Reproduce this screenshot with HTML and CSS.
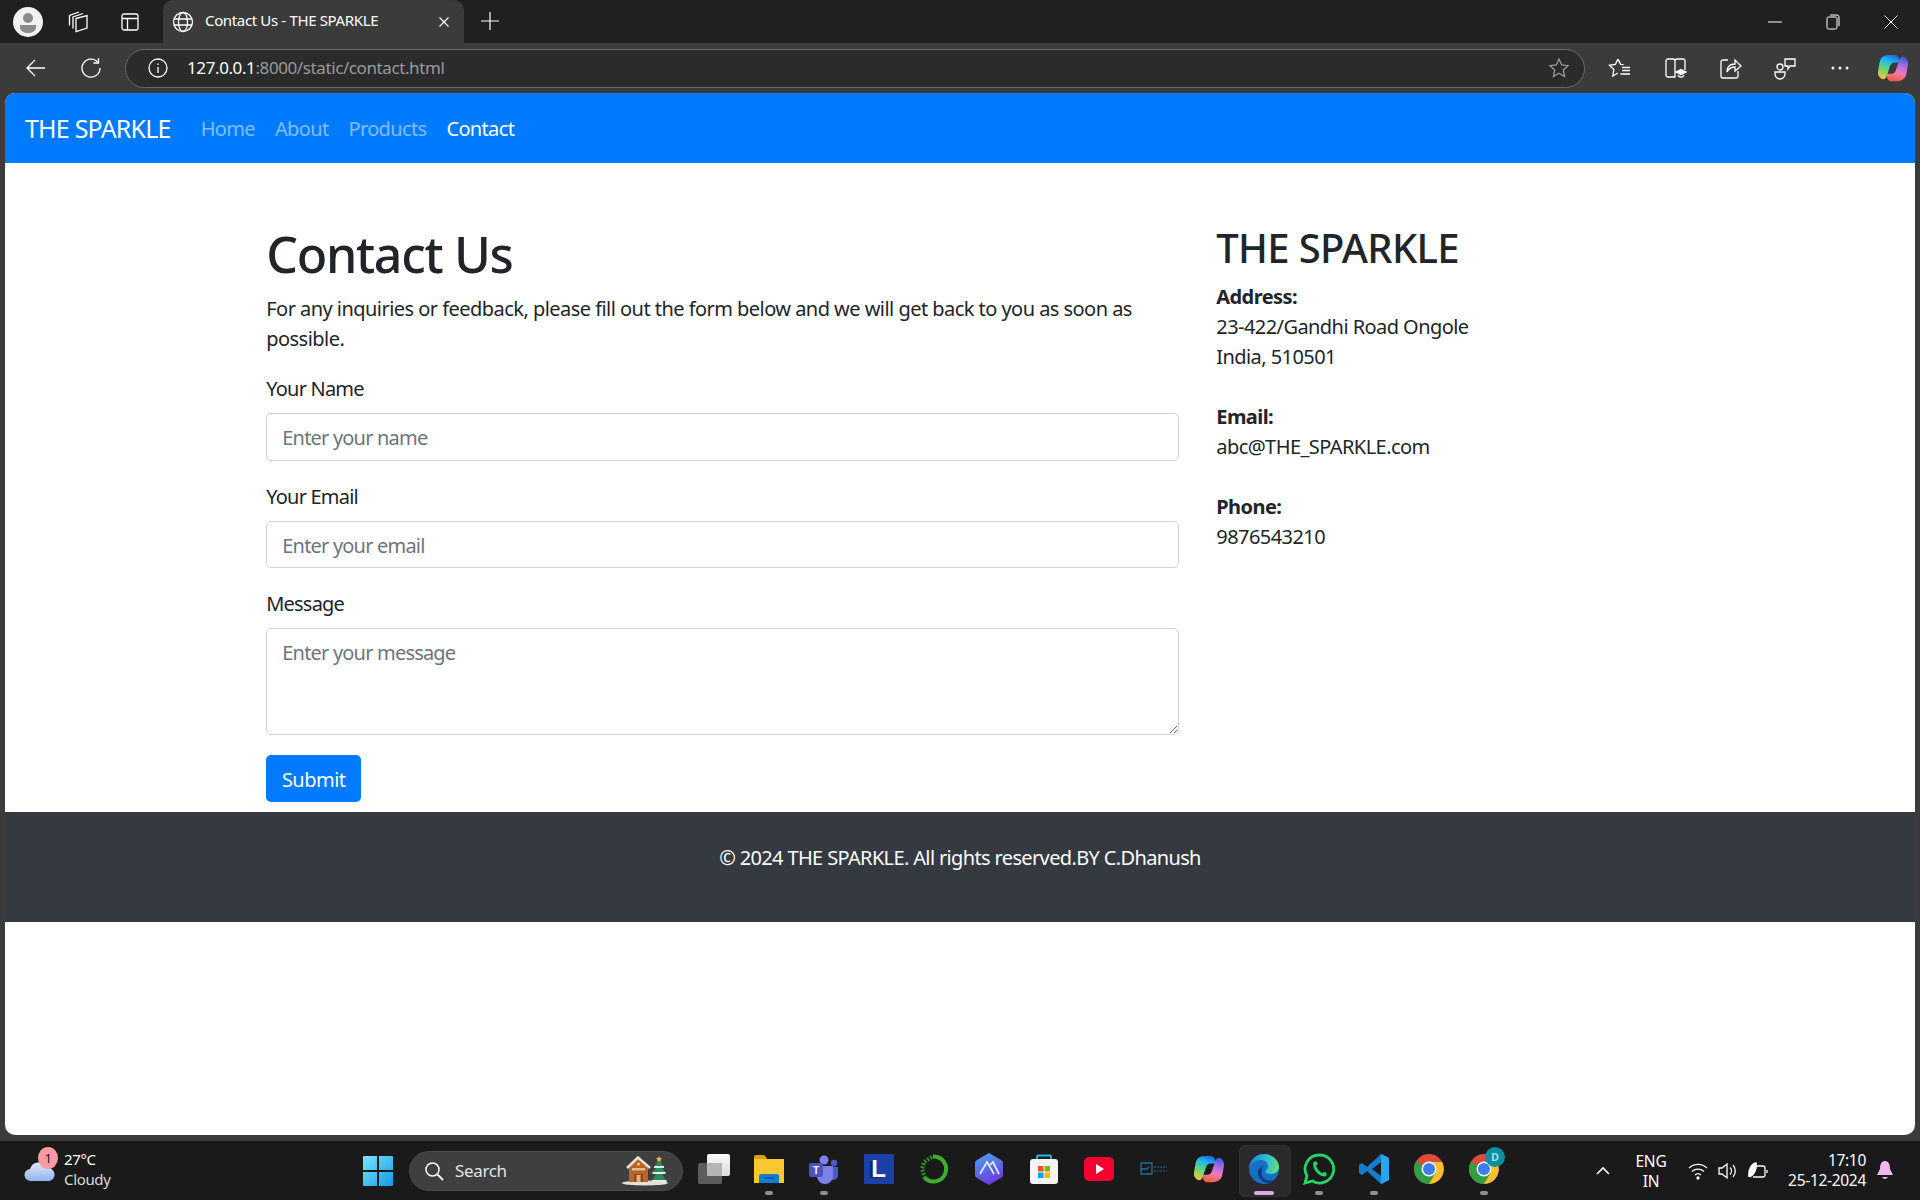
FILE: index.html
```html
<!DOCTYPE html>
<html lang="en">
<head>
<meta charset="utf-8">
<title>Contact Us - THE SPARKLE</title>
<link rel="stylesheet" href="styles.css">
</head>
<body>
<svg class="defs" width="0" height="0" aria-hidden="true">
  <defs>
    <linearGradient id="cpA" x1=".6" y1="0" x2=".3" y2="1"><stop offset="0" stop-color="#1a6fe0"/><stop offset=".25" stop-color="#1fb6f2"/><stop offset=".6" stop-color="#5fd87a"/><stop offset="1" stop-color="#f5c52e"/></linearGradient>
    <linearGradient id="cpB" x1=".6" y1="0" x2=".4" y2="1"><stop offset="0" stop-color="#3a5fd8"/><stop offset=".35" stop-color="#b46be6"/><stop offset=".65" stop-color="#f07ab8"/><stop offset="1" stop-color="#f0603a"/></linearGradient>
    <linearGradient id="edgeA" x1="0" y1=".5" x2="1" y2=".6"><stop offset="0" stop-color="#1a86d8"/><stop offset=".6" stop-color="#2fc0c8"/><stop offset="1" stop-color="#66e07a"/></linearGradient>
    <linearGradient id="winA" x1="0" y1="0" x2="1" y2="1"><stop offset="0" stop-color="#7be6fb"/><stop offset="1" stop-color="#0f9ae8"/></linearGradient>
    <linearGradient id="cloudA" x1="0" y1="0" x2="0" y2="1"><stop offset="0" stop-color="#dfe9fb"/><stop offset="1" stop-color="#8fb4ef"/></linearGradient>
    <linearGradient id="arcA" x1="0" y1="0" x2=".4" y2="1"><stop offset="0" stop-color="#4aa6f0"/><stop offset="1" stop-color="#6a3fe0"/></linearGradient>
    <linearGradient id="stackA" x1="0" y1="0" x2="0" y2="1"><stop offset="0" stop-color="#fafafa"/><stop offset="1" stop-color="#dcdcdc"/></linearGradient>
    <symbol id="copilot" viewBox="0 0 32 32">
      <path d="M21 30h-7c-2.500 0-3.800-2-4.300-4L8.500 22h6c3 0 4-2 5-5l3-9c.7-2 2-4 4-4h.5c3 1 5.500 4 5 8l-1.500 9c-.8 5-4 9-10.500 9z" fill="url(#cpB)"/>
      <path d="M11 2h7c2.500 0 3.800 2 4.300 4l1.200 4h-6c-3 0-4 2-5 5l-3 9c-.7 2-2 4-4 4H5c-3-1-5.500-4-5-8l1.500-9C2.300 6 4.500 2 11 2z" fill="url(#cpA)"/>
    </symbol>
    <symbol id="chrome" viewBox="0 0 32 32">
      <circle cx="16" cy="16" r="15" fill="#dd4b39"/>
      <path d="M16 16 3 8.500A15 15 0 0 0 16 31l6.500-11z" fill="#2f9e44"/>
      <path d="M16 9h13a15 15 0 0 1-13 22l6.500-11z" fill="#fbc02d"/>
      <circle cx="16" cy="16" r="7.500" fill="#fff"/><circle cx="16" cy="16" r="6" fill="#3b7ded"/>
    </symbol>
  </defs>
</svg>

<header class="tabstrip">
  <span class="slot avatar-slot"><svg width="30" height="30" viewBox="0 0 30 30"><circle cx="15" cy="15" r="15" fill="#f2f2f2"/><circle cx="15" cy="11" r="5" fill="#8a8a8a"/><path d="M7 18h16v2c0 4-4 6-8 6s-8-2-8-6z" fill="#8a8a8a"/></svg></span>
  <span class="slot strip-icon"><svg width="24" height="24" viewBox="0 0 24 24" class="line"><path d="M10 8.500l11-3v12.500l-11 3.500z"/><path d="M7 18.500V7L17 3.500"/><path d="M3.500 15.500V5.500L13 2"/></svg></span>
  <span class="slot strip-icon"><svg width="20" height="20" viewBox="0 0 20 20" class="line"><rect x="2" y="2" width="16" height="16" rx="2"/><path d="M2 6.500h16M7.500 6.500V18"/></svg></span>
  <div class="tab">
    <svg width="22" height="22" viewBox="0 0 22 22" class="line"><circle cx="11" cy="11" r="9.500"/><ellipse cx="11" cy="11" rx="4.500" ry="9.500"/><path d="M2 8h18M2 14h18"/></svg>
    <span class="tab-title">Contact Us - THE SPARKLE</span>
    <svg class="tab-close" width="12" height="12" viewBox="0 0 12 12"><path d="M1.500 1.500l9 9M10.500 1.500l-9 9" stroke="#fff" stroke-width="1.200"/></svg>
  </div>
  <span class="slot plus"><svg width="18" height="18" viewBox="0 0 18 18"><path d="M9 0v18M0 9h18" stroke="#fff" stroke-width="1.200"/></svg></span>
  <div class="winctrl">
    <span class="slot ctrl"><svg width="14" height="14" viewBox="0 0 14 14"><path d="M0 7h14" stroke="#fff"/></svg></span>
    <span class="slot ctrl"><svg width="14" height="16" viewBox="0 0 14 16" class="line thin"><rect x="1" y="3" width="10" height="12" rx="1.500"/><path d="M4 1h7a2 2 0 0 1 2 2v9"/></svg></span>
    <span class="slot ctrl"><svg width="14" height="14" viewBox="0 0 14 14"><path d="M.5.500l13 13M13.500.500l-13 13" stroke="#fff"/></svg></span>
  </div>
</header>

<nav class="toolbar">
  <span class="slot tool back"><svg width="20" height="18" viewBox="0 0 20 18" class="line"><path d="M19 9H1M9 1 1 9l8 8"/></svg></span>
  <span class="slot tool refresh"><svg width="22" height="22" viewBox="0 0 22 22" class="line"><path d="M18 5.500A9 9 0 1 0 20 11"/><path d="M18.500 1v5h-5"/></svg></span>
  <div class="omnibox">
    <svg width="20" height="20" viewBox="0 0 20 20" class="line"><circle cx="10" cy="10" r="9"/><path d="M10 9v6M10 5.500v1.500"/></svg>
    <span class="url"><span class="url-host">127.0.0.1</span>:8000/static/contact.html</span>
    <svg class="star" width="22" height="22" viewBox="0 0 22 22"><path d="M11 2l2.700 6 6.300.700-4.700 4.300 1.300 6.500L11 16.200 5.400 19.500l1.300-6.500L2 8.700 8.300 8z" fill="none" stroke="#9a9a9a" stroke-width="1.300"/></svg>
  </div>
  <div class="tool-right">
    <span class="slot tool"><svg width="24" height="24" viewBox="0 0 24 24" class="line"><path d="M10 3 7.300 8.500 1.500 9.300 5.800 13.500 4.800 20 10 17M10 3l2.600 5.300 3 .400M14 11.500h8M14 14.500h8M12.500 18h9.500"/></svg></span>
    <span class="slot tool"><svg width="24" height="24" viewBox="0 0 24 24" class="line"><path d="M12 5v16H5a2 2 0 0 1-2-2V5a2 2 0 0 1 2-2h5a2 2 0 0 1 2 2zM12 5a2 2 0 0 1 2-2h6a2 2 0 0 1 2 2v9"/><path d="M13 16l5-2.500 5 2.500-5 2.500z" fill="#fff"/><path d="M15 19c1 3 5 3 6 0"/></svg></span>
    <span class="slot tool"><svg width="24" height="24" viewBox="0 0 24 24" class="line"><path d="M10 4H5a2 2 0 0 0-2 2v14a2 2 0 0 0 2 2h13a2 2 0 0 0 2-2v-5"/><path d="M9 16c0-5 3-8 8-8V4l6 6-6 5v-4c-3 0-6 1-8 5z"/></svg></span>
    <span class="slot tool"><svg width="24" height="24" viewBox="0 0 24 24" class="line"><circle cx="7" cy="11" r="3"/><path d="M2 16h10v2a5 5 0 0 1-10 0z"/><path d="M12 3h10v7h-5l-2 3v-3h-3z"/></svg></span>
    <span class="slot tool"><svg width="18" height="4" viewBox="0 0 18 4"><circle cx="2" cy="2" r="1.500" fill="#fff"/><circle cx="9" cy="2" r="1.500" fill="#fff"/><circle cx="16" cy="2" r="1.500" fill="#fff"/></svg></span>
    <span class="slot tool tool-copilot"><svg width="30" height="30"><use href="#copilot"/></svg></span>
  </div>
</nav>

<div class="viewport">
  <div class="navbar">
    <a class="brand">THE SPARKLE</a>
    <a class="nav-link">Home</a>
    <a class="nav-link">About</a>
    <a class="nav-link">Products</a>
    <a class="nav-link active">Contact</a>
  </div>
  <main class="container">
    <section class="col-main">
      <h1>Contact Us</h1>
      <p>For any inquiries or feedback, please fill out the form below and we will get back to you as soon as possible.</p>
      <form>
        <div class="group"><label for="n">Your Name</label><input id="n" type="text" placeholder="Enter your name"></div>
        <div class="group"><label for="e">Your Email</label><input id="e" type="email" placeholder="Enter your email"></div>
        <div class="group"><label for="m">Message</label><textarea id="m" placeholder="Enter your message"></textarea></div>
        <button type="button" class="submit">Submit</button>
      </form>
    </section>
    <aside class="col-side">
      <h2>THE SPARKLE</h2>
      <p><strong>Address:</strong><br>23-422/Gandhi Road Ongole<br>India, 510501</p>
      <p><strong>Email:</strong><br>abc@THE_SPARKLE.com</p>
      <p><strong>Phone:</strong><br>9876543210</p>
    </aside>
  </main>
  <footer class="footer"><p>&copy; 2024 THE SPARKLE. All rights reserved.BY C.Dhanush</p></footer>
</div>

<div class="taskbar">
  <div class="weather">
    <span class="weather-icon">
      <svg width="32" height="22" viewBox="0 0 32 22"><path d="M7 21a6 6 0 0 1-1-12 9 9 0 0 1 17-1 6.500 6.500 0 0 1 2 13z" fill="url(#cloudA)"/></svg>
      <span class="badge-one">1</span>
    </span>
    <span class="weather-text"><span>27°C</span><span class="dim">Cloudy</span></span>
  </div>
  <span class="slot win"><svg width="30" height="30" viewBox="0 0 30 30"><path d="M0 1a1 1 0 0 1 1-1h13v14H0zM16 0h13a1 1 0 0 1 1 1v13H16zM0 16h14v14H1a1 1 0 0 1-1-1zM16 16h14v13a1 1 0 0 1-1 1H16z" fill="url(#winA)"/></svg></span>
  <div class="search">
    <svg width="20" height="20" viewBox="0 0 20 20"><circle cx="8.500" cy="8.500" r="6.500" fill="none" stroke="#fff" stroke-width="1.500"/><path d="M13.500 13.500 19 19" stroke="#fff" stroke-width="1.800"/></svg>
    <span class="search-label">Search</span>
    <svg class="search-art" width="46" height="30" viewBox="0 0 46 30">
      <ellipse cx="23" cy="27" rx="23" ry="2.500" fill="#e8dfd8"/>
      <path d="M7 11 16 2l10 9v15H7z" fill="#b8642a"/>
      <path d="M5 12 16 1.500 28 12" fill="none" stroke="#e9e2da" stroke-width="2.500"/>
      <rect x="12" y="18" width="9" height="8" fill="#8e4a1e"/><rect x="14.500" y="19" width="4" height="7" fill="#e8b070"/>
      <rect x="10" y="12" width="13" height="2.500" fill="#d9c08a"/><circle cx="16.500" cy="8" r="1.500" fill="#f3d56a"/>
      <path d="M37 3l5 8h-10z" fill="#2e8b57"/><path d="M37 8l7 9H30z" fill="#2e8b57"/><path d="M37 13l8 13H29z" fill="#2e8b57"/>
      <path d="M32 11h10M30.500 17h13M29.500 25h15" stroke="#dfe9f2" stroke-width="2.200"/>
      <path d="M37 0l1 2 2 .3-1.500 1.500.3 2-1.800-1-1.800 1 .3-2L34 2.300l2-.3z" fill="#f0c040"/>
    </svg>
  </div>
  <div class="apps">
    <span class="app"><svg width="32" height="30" viewBox="0 0 32 30"><rect x="0" y="9" width="24" height="21" rx="2" fill="#5c5c5c"/><rect x="9" y="0" width="23" height="22" rx="2" fill="url(#stackA)"/><rect x="9" y="9" width="15" height="13" rx="1" fill="#b4b4b4"/></svg></span>
    <span class="app on"><svg width="30" height="30" viewBox="0 0 30 30"><path d="M0 3a2 2 0 0 1 2-2h7q2 0 3 2l1 2H0z" fill="#d9a20b"/><path d="M0 5h30v24H0z" fill="#fbc733"/><path d="M5 29v-7a2 2 0 0 1 2-2h16a2 2 0 0 1 2 2v7z" fill="#0f7fd0"/><path d="M10 24h10" stroke="#0a4f8f" stroke-width="1.500"/></svg></span>
    <span class="app on"><svg width="30" height="30" viewBox="0 0 30 30"><circle cx="15" cy="6" r="4.500" fill="#7b83eb"/><circle cx="25" cy="9" r="3.200" fill="#5059c9"/><path d="M20 13h9v8a5 5 0 0 1-9 3z" fill="#5059c9"/><path d="M8 12h16v10a8 8 0 0 1-16 0z" fill="#7b83eb"/><rect x="0" y="9" width="14" height="14" rx="2" fill="#4b53bc"/><text x="7" y="20" class="teams-t">T</text></svg></span>
    <span class="app"><span class="l-tile">L</span></span>
    <span class="app"><svg width="30" height="30" viewBox="0 0 30 30"><path d="M14 2.500A12.500 12.500 0 1 1 5 23" fill="none" stroke="#3fae2a" stroke-width="4"/><path d="M13 3 5 8 3 15l3 9" fill="none" stroke="#2f8f22" stroke-width="4" stroke-dasharray="2 1.500"/></svg></span>
    <span class="app"><svg width="28" height="32" viewBox="0 0 28 32"><path d="M14 0 26 7q2 1 2 3v12q0 2-2 3l-12 7-12-7q-2-1-2-3V10q0-2 2-3z" fill="url(#arcA)"/><path d="M5 21 12 9l7 12M15 12l3-3 6 12" fill="none" stroke="#e4edff" stroke-width="1.700"/></svg></span>
    <span class="app"><svg width="30" height="30" viewBox="0 0 30 30"><path d="M8 7V2.500a1 1 0 0 1 1-1h12a1 1 0 0 1 1 1V7" fill="none" stroke="#2bb7e8" stroke-width="1.800"/><rect x="1" y="5" width="28" height="25" rx="3" fill="#f5f5f5"/><rect x="9" y="12" width="5.500" height="5.500" fill="#f25022"/><rect x="15.500" y="12" width="5.500" height="5.500" fill="#7fba00"/><rect x="9" y="18.500" width="5.500" height="5.500" fill="#00a4ef"/><rect x="15.500" y="18.500" width="5.500" height="5.500" fill="#ffb900"/></svg></span>
    <span class="app"><svg width="30" height="24" viewBox="0 0 30 24"><rect width="30" height="24" rx="5" fill="#f5002f"/><path d="M12 7l8 5-8 5z" fill="#fff"/></svg></span>
    <span class="app"><svg width="28" height="14" viewBox="0 0 28 14"><path d="M1 1h11v11H1zM1 7h6l2-2" fill="none" stroke="#1f6f9c" stroke-width="1.300"/><path d="M14 5h13M14 9h13" stroke="#23404f" stroke-width="2" stroke-dasharray="2 1"/></svg></span>
    <span class="app"><svg width="30" height="30"><use href="#copilot"/></svg></span>
    <span class="app active-app"><svg width="32" height="32" viewBox="0 0 32 32"><circle cx="16" cy="16" r="15" fill="#1470c4"/><path d="M1 15C2 6 9 1 16 1c8 0 15 6 15 13 0 4-3 7-8 7-3 0-6-1-6-3 0 0 3-1 3-5 0-4-4-6-7-6C7 7 2 11 1 15z" fill="url(#edgeA)"/><path d="M15 13c-4 1-6 5-5 9 1 4 5 8 10 8 3 0 6-2 7-4-3 2-7 2-10 0-3-2-4-5-3-9 0-2 1-3 1-4z" fill="#123f8a"/></svg></span>
    <span class="app on"><svg width="32" height="32" viewBox="0 0 32 32"><path d="M16 2a14 14 0 0 0-12 21L2 30l7.500-2A14 14 0 1 0 16 2z" fill="none" stroke="#25d366" stroke-width="2.800"/><path d="M12 10c-1.500 5 4 12 10 12" fill="none" stroke="#25d366" stroke-width="3" stroke-linecap="round"/><circle cx="12.500" cy="10.500" r="2" fill="#25d366"/><circle cx="21.500" cy="21" r="2" fill="#25d366"/></svg></span>
    <span class="app on"><svg width="30" height="30" viewBox="0 0 30 30"><path d="M22 0 30 4v22l-8 4-14-13-5 4-3-2v-8l3-2 5 4z" fill="#0f7fd0"/><path d="M22 8 13 15l9 7z" fill="#1a1a1a"/><path d="M22 0 30 4v22l-8 4z" fill="#27a6ee"/></svg></span>
    <span class="app"><svg width="32" height="32"><use href="#chrome"/></svg></span>
    <span class="app on chrome-two"><svg width="32" height="32"><use href="#chrome"/></svg><span class="badge-d">D</span></span>
  </div>
  <div class="tray">
    <span class="caret"><svg width="14" height="9" viewBox="0 0 14 9"><path d="M1 8l6-6 6 6" fill="none" stroke="#fff" stroke-width="1.600"/></svg></span>
    <span class="lang"><span>ENG</span><span>IN</span></span>
    <span class="tray-icons">
      <svg width="20" height="18" viewBox="0 0 20 18" class="line"><path d="M1 6a13 13 0 0 1 18 0M4 9.500a9 9 0 0 1 12 0M7 13a4.500 4.500 0 0 1 6 0"/><circle cx="10" cy="16" r="1" fill="#fff"/></svg>
      <svg width="20" height="18" viewBox="0 0 20 18" class="line"><path d="M1 6h3l5-4v14l-5-4H1zM12 5.500a5 5 0 0 1 0 7M15 3a9 9 0 0 1 0 12"/></svg>
      <svg width="20" height="18" viewBox="0 0 20 18" class="line"><path d="M7 4h8a2 2 0 0 1 2 2v7a2 2 0 0 1-2 2H5M19 8v3"/><path d="M1 15C0 8 3 2 8 1c1 5-1 11-6 14" fill="#fff"/></svg>
    </span>
    <span class="clock"><span>17:10</span><span>25-12-2024</span></span>
    <svg class="bell" width="16" height="20" viewBox="0 0 16 20"><path d="M8 0c4 0 5 4 5 8l3 6H0l3-6c0-4 1-8 5-8z" fill="#efb8ef"/><path d="M5 16h6q-3 4-6 0z" fill="#efb8ef"/></svg>
  </div>
</div>
</body>
</html>
```

FILE: styles.css
```css
* { box-sizing: border-box; }
html, body { margin: 0; height: 100%; }
body {
  width: 1920px; height: 1200px; overflow: hidden;
  display: flex; flex-direction: column;
  background: #3b3b3b;
  font-family: "Noto Sans", "Liberation Sans", sans-serif;
  color: #212529;
}
.defs { position: absolute; }
.slot { display: flex; align-items: center; justify-content: center; flex: none; }
.line { fill: none; stroke: #fff; stroke-width: 1.300; }
.line.thin { stroke-width: 1; }

.tabstrip { height: 43px; flex: none; background: #202020; display: flex; align-items: center; padding-left: 13px; }
.avatar-slot { width: 30px; margin-right: 9px; }
.strip-icon { width: 52px; }
.tab {
  width: 301px; height: 43px; margin-left: 7px; background: #3b3b3b;
  border-radius: 10px 10px 0 0; display: flex; align-items: center; padding: 0 14px 0 9px;
  color: #fff; font-size: 15px; letter-spacing: -.35px;
}
.tab-title { margin-left: 11px; flex: 1; white-space: nowrap; padding-bottom: 4px; }
.plus { margin-left: 17px; width: 18px; padding-bottom: 2px; height: 20px; }
.winctrl { margin-left: auto; display: flex; }
.ctrl { width: 58px; height: 43px; }

.toolbar { height: 50px; flex: none; background: #3b3b3b; display: flex; align-items: center; padding: 0 0 0 8px; }
.tool { width: 55px; height: 40px; }
.tool-copilot { margin-left: -2px; }
.omnibox {
  width: 1465px; height: 39px; margin-left: 7px; border: 1px solid #6a6a6a; border-radius: 20px; background: #2b2b2b;
  display: flex; align-items: center; padding: 0 14px 0 22px;
}
.url { margin-left: 19px; font-size: 17px; letter-spacing: -.4px; color: #9a9a9a; flex: 1; white-space: nowrap; padding-bottom: 2px; }
.url-host { color: #fff; }
.tool-right { display: flex; margin-left: 7px; }

.viewport { height: 1042px; flex: none; margin: 0 5px; background: #fff; border-radius: 10px; overflow: hidden; display: flex; flex-direction: column; }
.navbar { height: 70px; flex: none; background: #007bff; display: flex; align-items: center; padding: 0 20px; }
.brand { color: #fff; font-size: 25px; margin-right: 20px; letter-spacing: -.8px; white-space: nowrap; }
.nav-link { color: rgba(255,255,255,.5); font-size: 20px; padding: 0 10px; letter-spacing: -.65px; }
.nav-link.active { color: #fff; }

.container { width: 1425px; margin: 60px auto 0; display: flex; flex: none; }
.col-main { width: 950px; padding: 0 18.750px; }
.col-side { width: 475px; padding: 0 18.750px; }
h1 { margin: 0 0 9px; padding-top: 1px; font-size: 50px; line-height: 60px; font-weight: 500; letter-spacing: -1.300px; }
h2 { margin: 0 0 9px; padding-top: 1px; font-size: 40px; line-height: 48px; font-weight: 500; letter-spacing: -.660px; }
p { margin: 0 0 19px; padding-top: 1px; font-size: 20px; line-height: 30px; letter-spacing: -.54px; }
.col-side p { margin-bottom: 29px; letter-spacing: -.56px; }
strong { font-weight: 700; }
.group { margin-bottom: 20px; }
label { display: block; margin-bottom: 9px; padding-top: 1px; font-size: 20px; line-height: 30px; letter-spacing: -.8px; }
input, textarea {
  display: block; width: 100%; height: 47.500px; padding: 8.500px 15px 6.500px;
  border: 1px solid #ced4da; border-radius: 5px; background: #fff; color: #495057;
  font: 20px/30px "Noto Sans", "Liberation Sans", sans-serif; letter-spacing: -.8px; outline: none;
}
textarea { height: 107px; resize: vertical; }
input::placeholder, textarea::placeholder { color: #6c757d; opacity: 1; }
.submit {
  display: block; width: 95px; height: 47px; padding: 2px 0 0; border: 0; border-radius: 5px; background: #007bff; color: #fff;
  font: 20px/30px "Noto Sans", "Liberation Sans", sans-serif; letter-spacing: -.5px;
}
.footer { margin-top: 10px; height: 110px; flex: none; background: #343a40; color: #fff; padding-top: 30px; text-align: center; }
.footer p { letter-spacing: -.64px; }

.taskbar { position: relative; margin-top: 6px; height: 59px; flex: none; background: #1a1a1a; display: flex; align-items: center; color: #fff; font-size: 15px; letter-spacing: -.35px; }
.weather { width: 363px; flex: none; display: flex; align-items: center; padding-left: 24px; }
.weather-icon { position: relative; display: flex; width: 40px; }
.badge-one { position: absolute; left: 14px; top: -13px; width: 20px; height: 22px; border-radius: 50%; background: #ff9aa2; color: #1a1a1a; font-size: 13px; line-height: 22px; text-align: center; }
.weather-text { display: flex; flex-direction: column; line-height: 20px; font-size: 15px; padding-bottom: 4px; }
.dim { color: #d8d8d8; }
.win { width: 30px; }
.search { width: 274px; height: 40px; margin-left: 16px; border-radius: 20px; background: #3f3f3f; border: 1px solid #4b4b4b; display: flex; align-items: center; padding: 0 14px 0 14px; }
.search-label { margin-left: 11px; flex: 1; font-size: 17px; color: #e4e4e4; }
.apps { display: flex; margin-left: 3px; flex: none; }
.app { position: relative; width: 55px; height: 59px; display: flex; align-items: center; justify-content: center; padding-bottom: 4px; }
.app.on::after { content: ""; position: absolute; left: 23.500px; bottom: 5px; width: 8px; height: 4px; border-radius: 2px; background: #8e8e8e; }
.active-app::before { content: ""; position: absolute; left: 2.500px; top: 4px; width: 50px; height: 50px; background: #2a2a2a; border-radius: 6px; border: 1px solid #333; }
.active-app svg { position: relative; }
.active-app::after { content: ""; position: absolute; left: 17.500px; bottom: 5px; width: 20px; height: 4px; border-radius: 2px; background: #e0a8e8; }
.l-tile { width: 30px; height: 30px; background: #1c3faa; color: #fff; font: 700 24px/30px "Liberation Sans", sans-serif; text-align: center; text-shadow: -3px 1px #0b2a6a; }
.teams-t { fill: #fff; font: 700 10px "Liberation Sans", sans-serif; text-anchor: middle; }
.badge-d { position: absolute; left: 29px; top: 6px; width: 20px; height: 20px; border-radius: 50%; background: #0b8ea0; color: #9fdfe8; font-size: 11px; font-weight: 700; line-height: 20px; text-align: center; letter-spacing: 0; }
.tray { flex: 1; display: flex; align-items: center; }
.caret { width: 14px; margin-left: 85px; display: flex; }
.lang { display: flex; flex-direction: column; align-items: center; width: 40px; margin-left: 21px; line-height: 20px; font-size: 15.500px; letter-spacing: -.2px; }
.tray-icons { display: flex; gap: 10px; margin-left: 17px; }
.clock { display: flex; flex-direction: column; align-items: flex-end; width: 90px; margin-left: 8px; line-height: 20px; font-size: 15.500px; letter-spacing: -.3px; padding-bottom: 2px; }
.bell { margin-left: 11px; }
```
